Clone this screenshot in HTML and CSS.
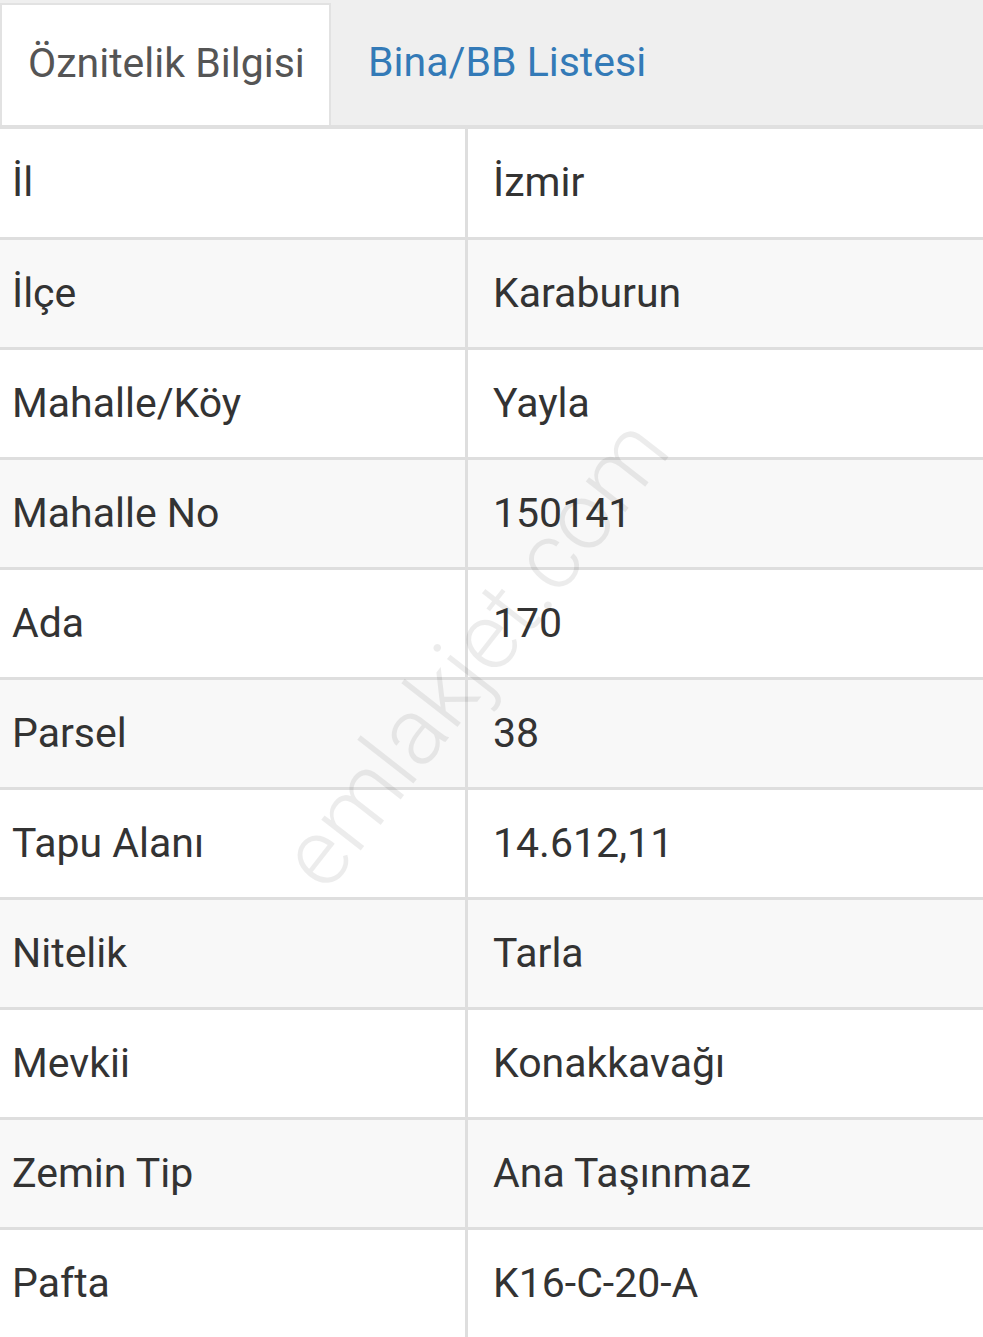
FILE: index.html
```html
<!DOCTYPE html>
<html lang="tr">
<head>
    <meta charset="UTF-8">
    <meta name="viewport" content="width=device-width, initial-scale=1.0">
    <title>Öznitelik Bilgisi</title>
    <link rel="stylesheet" href="styles.css">
</head>
<body>
    <div class="tabs">
        <div class="tab active">Öznitelik Bilgisi</div>
        <div class="tab">Bina/BB Listesi</div>
    </div>

    <div class="panel">
        <table class="info-table">
            <tr><td>İl</td><td>İzmir</td></tr>
            <tr><td>İlçe</td><td>Karaburun</td></tr>
            <tr><td>Mahalle/Köy</td><td>Yayla</td></tr>
            <tr><td>Mahalle No</td><td>150141</td></tr>
            <tr><td>Ada</td><td>170</td></tr>
            <tr><td>Parsel</td><td>38</td></tr>
            <tr><td>Tapu Alanı</td><td>14.612,11</td></tr>
            <tr><td>Nitelik</td><td>Tarla</td></tr>
            <tr><td>Mevkii</td><td>Konakkavağı</td></tr>
            <tr><td>Zemin Tip</td><td>Ana Taşınmaz</td></tr>
            <tr><td>Pafta</td><td>K16-C-20-A</td></tr>
        </table>
        <div class="watermark">emlakjet.com</div>
    </div>
</body>
</html>
```

FILE: styles.css
```css
body {
    margin: 0;
    font-family: 'Roboto', 'Liberation Sans', sans-serif;
    color: #333;
    background: #fff;
    overflow: hidden;
}

.tabs {
    display: flex;
    align-items: stretch;
    height: 122px;
    padding-top: 3px;
    background: #efefef;
    border-bottom: 4px solid #e0e0e0;
}

.tab {
    display: flex;
    align-items: center;
    padding: 0 26px 4px 37px;
    font-size: 41px;
    color: #337ab7;
    white-space: nowrap;
}

.tab.active {
    width: 331px;
    box-sizing: border-box;
    padding-left: 26px;
    padding-right: 0;
    background: #fff;
    color: #555;
    border: 2px solid #e2e2e2;
    border-bottom: none;
}

.panel {
    position: relative;
}

.info-table {
    width: 100%;
    border-collapse: collapse;
}

.info-table td {
    height: 105px;
    padding: 0 0 2px 25px;
    font-size: 41px;
    vertical-align: middle;
    border-bottom: 3px solid #dedede;
}

.info-table tr:first-child td {
    height: 106px;
}

.info-table td:first-child {
    width: 453px;
    padding-left: 12px;
    border-right: 3px solid #dedede;
}

.info-table tr:nth-child(even) td {
    background: #f8f8f8;
}

.info-table tr:last-child td {
    border-bottom: none;
}

.watermark {
    position: absolute;
    left: 474px;
    top: 524px;
    transform: translate(-50%, -50%) rotate(-52deg);
    font-size: 95px;
    font-weight: 300;
    color: rgba(0, 0, 0, 0.075);
    white-space: nowrap;
    pointer-events: none;
}
```
